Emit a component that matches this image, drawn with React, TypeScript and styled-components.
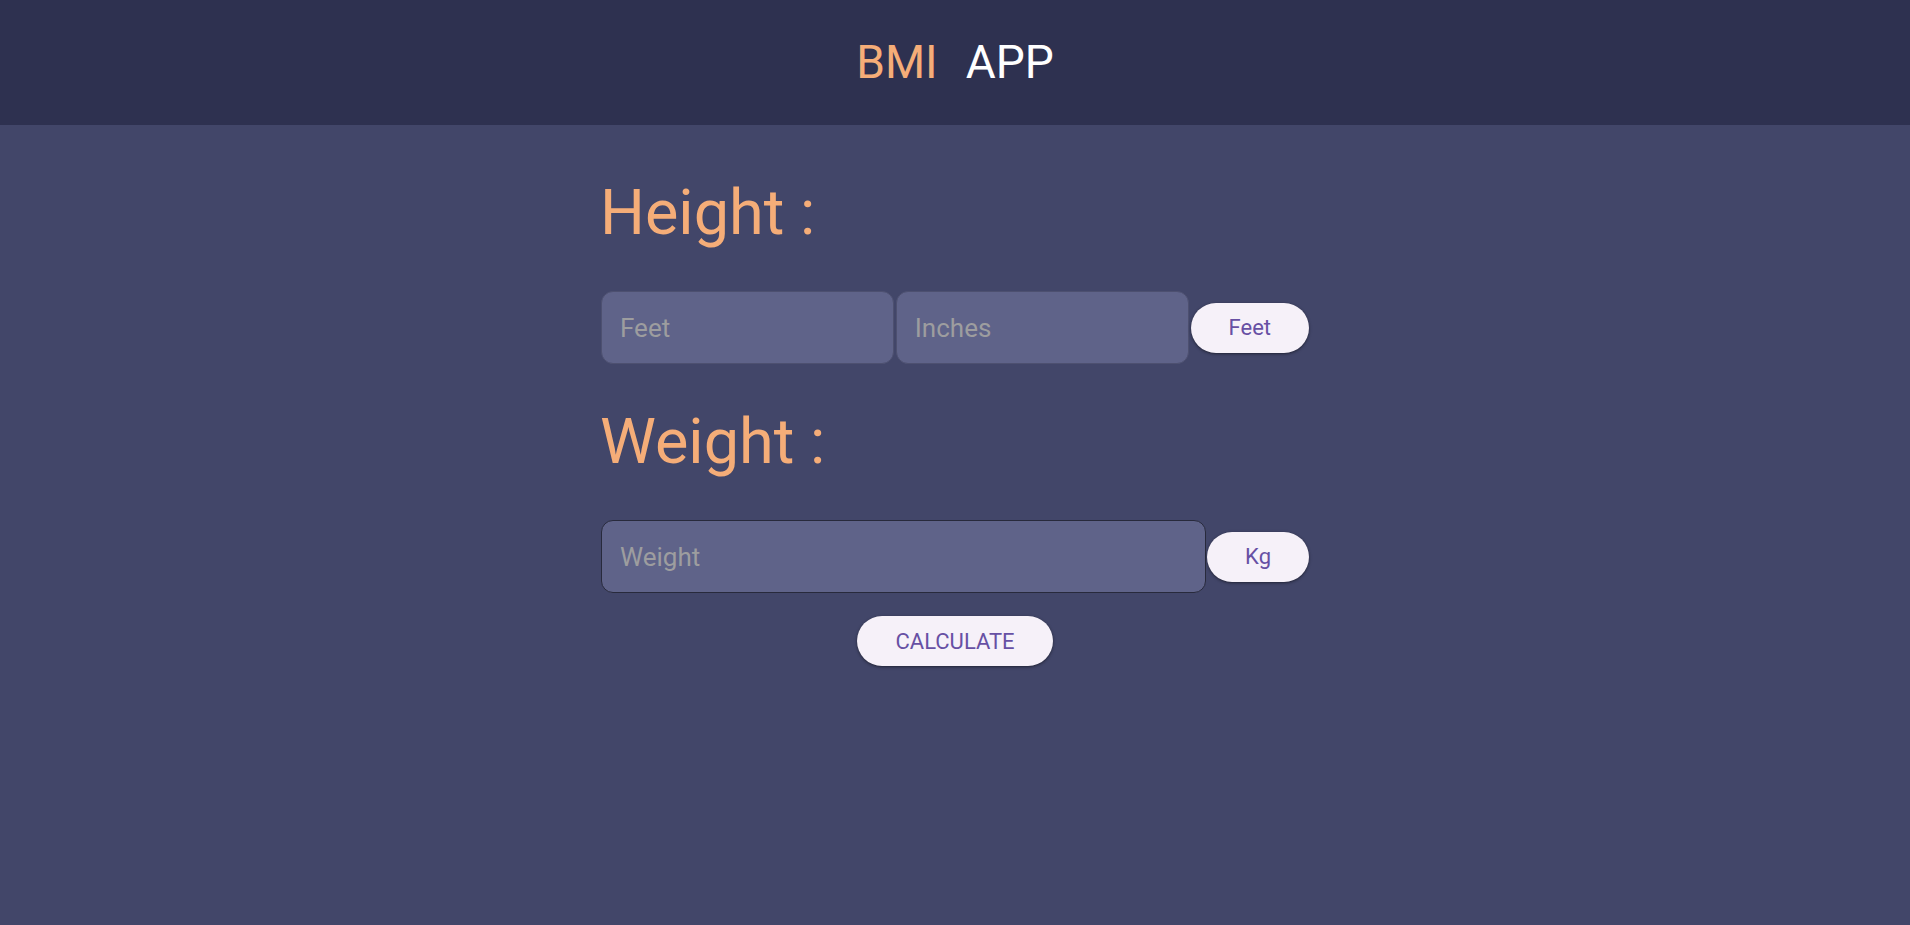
import React from "react";
import styled, { createGlobalStyle } from "styled-components";

const Global = createGlobalStyle`
  html, body { margin: 0; padding: 0; }
  body {
    background: #424669;
    font-family: Roboto, "Noto Sans", "Liberation Sans", sans-serif;
    min-height: 925px;
  }
  * { box-sizing: border-box; }
`;

const Page = styled.div`
  min-height: 925px;
  background: #424669;
  display: flex;
  flex-direction: column;
`;

const Header = styled.header`
  height: 125px;
  background: #2e3150;
  display: flex;
  align-items: center;
  justify-content: center;
  font-size: 46px;
  font-weight: 400;
  padding-bottom: 1px;
`;

const Brand = styled.span<{ $accent?: boolean }>`
  color: ${(p) => (p.$accent ? "#f5ad78" : "#ffffff")};
  margin-right: ${(p) => (p.$accent ? "28px" : "0")};
`;

const Main = styled.main`
  width: 708px;
  margin: 0 auto;
  padding-top: 50px;
  display: flex;
  flex-direction: column;
`;

const Heading = styled.h2`
  margin: 0 0 41px -1px;
  font-size: 63px;
  line-height: 75px;
  font-weight: 400;
  color: #f5ad78;
`;

const Row = styled.div<{ $last?: boolean }>`
  display: flex;
  align-items: center;
  gap: ${(p) => (p.$last ? "1px" : "2px")};
  margin-bottom: ${(p) => (p.$last ? "23px" : "40px")};
`;

const Input = styled.input<{ $focused?: boolean }>`
  flex: 1;
  min-width: 0;
  height: 73px;
  border-radius: 12px;
  border: 1px solid ${(p) => (p.$focused ? "#282a3c" : "#4d5070")};
  background: #5f6389;
  padding: 0 18px;
  font-family: inherit;
  font-size: 26px;
  color: #e6e6e6;
  outline: none;
  &::placeholder { color: #9d9d9f; }
`;

const Pill = styled.button`
  height: 50px;
  padding: 0 38px;
  border: none;
  border-radius: 25px;
  background: #f6f1f9;
  color: #6750a4;
  font-family: inherit;
  font-size: 22px;
  font-weight: 400;
  cursor: pointer;
  box-shadow: 0 1px 2px rgba(0, 0, 0, 0.3), 0 1px 3px 1px rgba(0, 0, 0, 0.15);
  flex: none;
`;

const Center = styled.div`
  display: flex;
  justify-content: center;
`;

export default function App() {
  return (
    <>
      <Global />
      <Page>
        <Header>
          <Brand $accent>BMI</Brand>
          <Brand>APP</Brand>
        </Header>
        <Main>
          <Heading>Height :</Heading>
          <Row>
            <Input placeholder="Feet" />
            <Input placeholder="Inches" />
            <Pill>Feet</Pill>
          </Row>
          <Heading>Weight :</Heading>
          <Row $last>
            <Input placeholder="Weight" $focused />
            <Pill>Kg</Pill>
          </Row>
          <Center>
            <Pill>CALCULATE</Pill>
          </Center>
        </Main>
      </Page>
    </>
  );
}
